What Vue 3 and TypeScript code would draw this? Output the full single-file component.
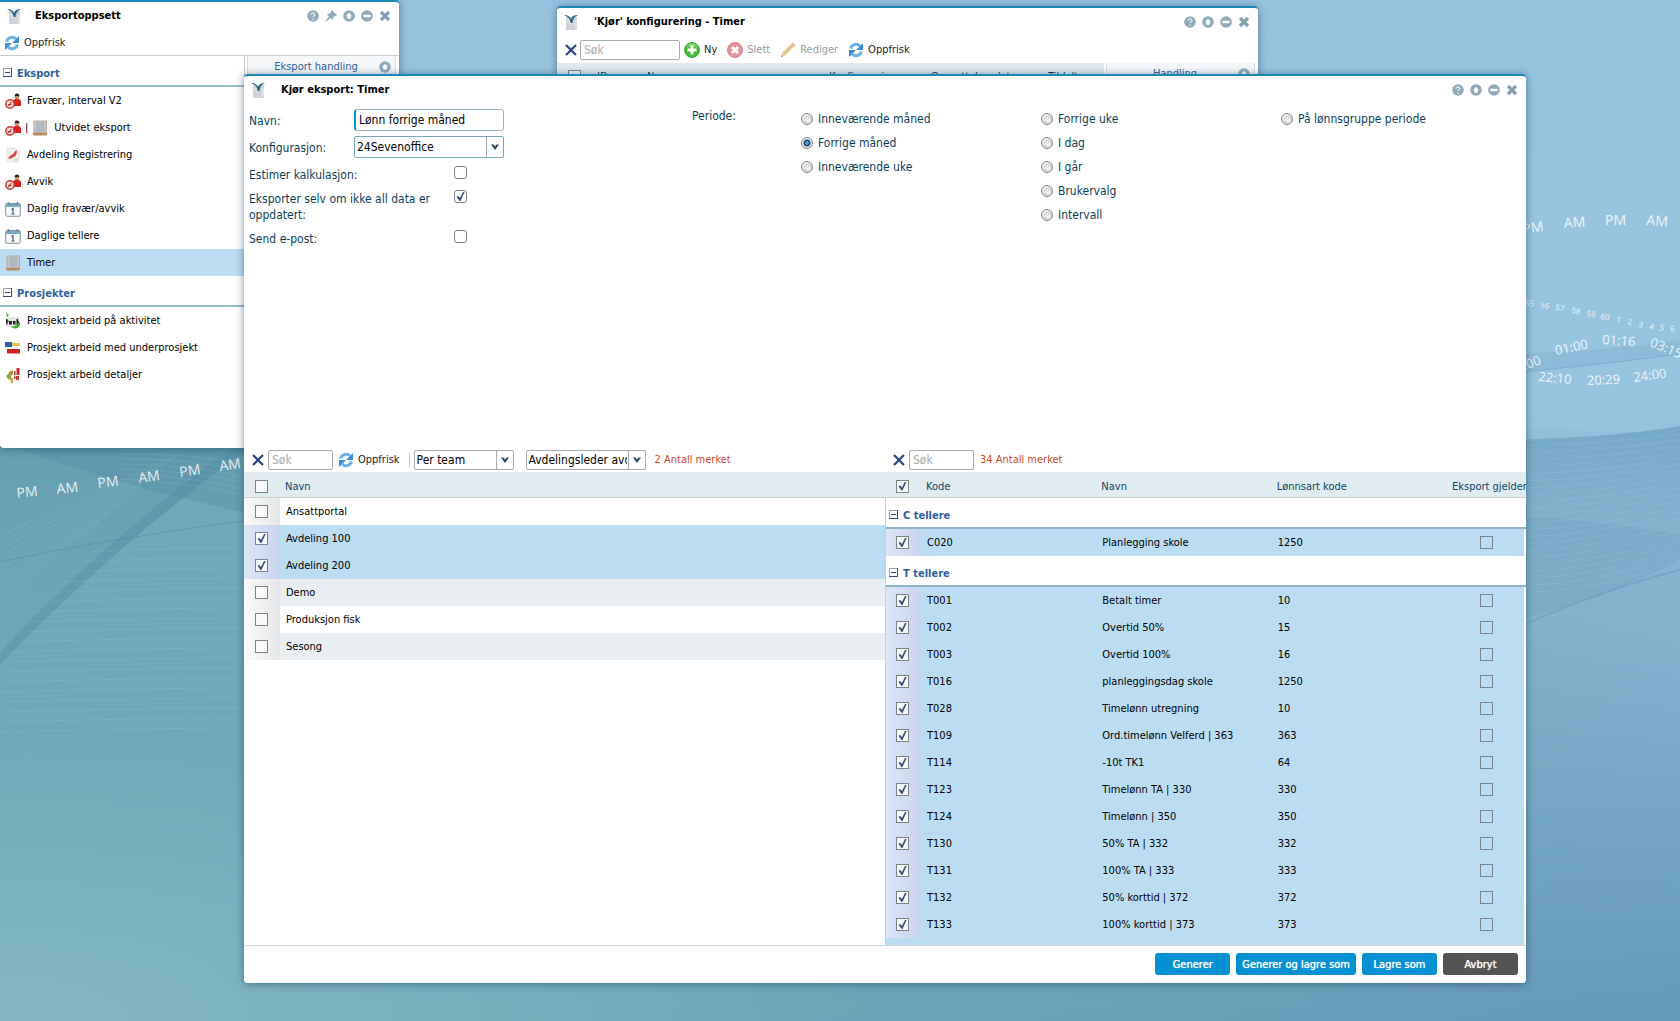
<script setup lang="ts">
import { ref } from 'vue'

interface NavItem { icon: string; label: string; extra?: string; active?: boolean }
interface NavGroup { title: string; items: NavItem[] }
interface CounterRow { code: string; name: string; wage: string }
interface CounterGroup { title: string; rows: CounterRow[] }
interface WallText { t: string; x: number; y: number; r: number }

const navGroups: NavGroup[] = [
  {
    title: 'Eksport',
    items: [
      { icon: 'person', label: 'Fravær, interval V2' },
      { icon: 'person', extra: 'sheet', label: 'Utvidet eksport' },
      { icon: 'dept', label: 'Avdeling Registrering' },
      { icon: 'person', label: 'Avvik' },
      { icon: 'calendar', label: 'Daglig fravær/avvik' },
      { icon: 'calendar', label: 'Daglige tellere' },
      { icon: 'sheet', label: 'Timer', active: true },
    ],
  },
  {
    title: 'Prosjekter',
    items: [
      { icon: 'task', label: 'Prosjekt arbeid på aktivitet' },
      { icon: 'blocks', label: 'Prosjekt arbeid med underprosjekt' },
      { icon: 'details', label: 'Prosjekt arbeid detaljer' },
    ],
  },
]

const periodColumns: string[][] = [
  ['Inneværende måned', 'Forrige måned', 'Inneværende uke'],
  ['Forrige uke', 'I dag', 'I går', 'Brukervalg', 'Intervall'],
  ['På lønnsgruppe periode'],
]
const period = ref('Forrige måned')
const exportName = ref('Lønn forrige måned')

const teams = ref([
  { name: 'Ansattportal', on: false },
  { name: 'Avdeling 100', on: true },
  { name: 'Avdeling 200', on: true },
  { name: 'Demo', on: false },
  { name: 'Produksjon fisk', on: false },
  { name: 'Sesong', on: false },
])

const counterGroups: CounterGroup[] = [
  { title: 'C tellere', rows: [{ code: 'C020', name: 'Planlegging skole', wage: '1250' }] },
  {
    title: 'T tellere',
    rows: [
      { code: 'T001', name: 'Betalt timer', wage: '10' },
      { code: 'T002', name: 'Overtid 50%', wage: '15' },
      { code: 'T003', name: 'Overtid 100%', wage: '16' },
      { code: 'T016', name: 'planleggingsdag skole', wage: '1250' },
      { code: 'T028', name: 'Timelønn utregning', wage: '10' },
      { code: 'T109', name: 'Ord.timelønn Velferd | 363', wage: '363' },
      { code: 'T114', name: '-10t TK1', wage: '64' },
      { code: 'T123', name: 'Timelønn TA | 330', wage: '330' },
      { code: 'T124', name: 'Timelønn | 350', wage: '350' },
      { code: 'T130', name: '50% TA | 332', wage: '332' },
      { code: 'T131', name: '100% TA | 333', wage: '333' },
      { code: 'T132', name: '50% korttid | 372', wage: '372' },
      { code: 'T133', name: '100% korttid | 373', wage: '373' },
    ],
  },
]

const tools: Record<string, string> = { help: 'Hjelp', pin: 'Fest', up: 'Maksimer', minus: 'Minimer', close: 'Lukk' }

const ampm: WallText[] = [
  { t: 'PM', x: 17, y: 498, r: -6 }, { t: 'AM', x: 57, y: 494, r: -6 },
  { t: 'PM', x: 98, y: 488, r: -7 }, { t: 'AM', x: 139, y: 483, r: -8 },
  { t: 'PM', x: 180, y: 477, r: -8 }, { t: 'AM', x: 220, y: 471, r: -8 },
  { t: 'PM', x: 1523, y: 234, r: -8 }, { t: 'AM', x: 1564, y: 228, r: -4 },
  { t: 'PM', x: 1605, y: 225, r: 0 }, { t: 'AM', x: 1646, y: 225, r: 4 },
]
const clock: WallText[] = [
  { t: '03:00', x: 1511, y: 376, r: -22 }, { t: '01:00', x: 1556, y: 355, r: -12 },
  { t: '01:16', x: 1602, y: 344, r: 4 }, { t: '03:15', x: 1649, y: 346, r: 22 },
  { t: '22:10', x: 1538, y: 381, r: 5 }, { t: '20:29', x: 1587, y: 385, r: -2 },
  { t: '24:00', x: 1634, y: 382, r: -8 },
]
const seconds: WallText[] = [
  { t: '55', x: 1525, y: 306, r: 4 }, { t: '56', x: 1540, y: 308, r: 6 },
  { t: '57', x: 1555, y: 310, r: 8 }, { t: '58', x: 1571, y: 313, r: 10 },
  { t: '59', x: 1586, y: 316, r: 10 }, { t: '60', x: 1600, y: 319, r: 10 },
  { t: '1', x: 1616, y: 322, r: 10 }, { t: '2', x: 1627, y: 324, r: 10 },
  { t: '3', x: 1638, y: 327, r: 10 }, { t: '4', x: 1649, y: 329, r: 10 },
  { t: '5', x: 1659, y: 330, r: 10 }, { t: '6', x: 1670, y: 331, r: 10 },
]

const fan = Array.from({ length: 12 }, (_, i) => `M0 ${536 + i * 7} Q ${70 - i * 2} ${502 + i * 5} ${176 - i * 7} ${456 + i * 6}`)
const ripples = Array.from({ length: 19 }, (_, i) => `M${Math.max(0, 90 - i * 9)} ${552 + i * 10} Q 150 ${548 + i * 10} 250 ${548 + i * 10}`)
const crest = Array.from({ length: 6 }, (_, i) => `M120 ${454 + i * 5} Q 190 ${452 + i * 6} 250 ${466 + i * 6}`)
const rightRipples = Array.from({ length: 22 }, (_, i) => `M1520 ${446 + i * 7} Q 1600 ${444 + i * 7} 1680 ${434 + i * 6}`)
</script>

<template>
  <div class="desktop">
    <svg class="wallpaper" viewBox="0 0 1680 1021" preserveAspectRatio="xMidYMid slice" aria-hidden="true">
      <defs>
        <linearGradient id="wp-base" x1="0" y1="0" x2="0" y2="1">
          <stop offset="0" stop-color="#98c2df" />
          <stop offset="0.4" stop-color="#96c5e1" />
          <stop offset="0.62" stop-color="#82b3cf" />
          <stop offset="1" stop-color="#6698b9" />
        </linearGradient>
        <linearGradient id="wp-left" x1="0" y1="0" x2="1" y2="0">
          <stop offset="0" stop-color="#6fa9b9" />
          <stop offset="0.35" stop-color="#6fa9b9" stop-opacity="0.95" />
          <stop offset="1" stop-color="#6fa9b9" stop-opacity="0" />
        </linearGradient>
        <radialGradient id="wp-corner" cx="0" cy="1" r="0.5">
          <stop offset="0" stop-color="#8abbc9" stop-opacity="0.8" />
          <stop offset="1" stop-color="#8abbc9" stop-opacity="0" />
        </radialGradient>
        <linearGradient id="wp-fold" x1="0" y1="0" x2="0" y2="1">
          <stop offset="0" stop-color="#6099ad" />
          <stop offset="1" stop-color="#6fa8b9" />
        </linearGradient>
        <linearGradient id="wp-wave" x1="0" y1="0" x2="0" y2="1">
          <stop offset="0" stop-color="#76a9c6" />
          <stop offset="1" stop-color="#76a9c6" stop-opacity="0" />
        </linearGradient>
      </defs>
      <rect width="1680" height="1021" fill="url(#wp-base)" />
      <rect y="430" width="1680" height="591" fill="url(#wp-left)" />
      <rect y="430" width="1680" height="591" fill="url(#wp-corner)" />
      <path d="M0 446H250V448Q120 540 0 665Z" fill="url(#wp-fold)" opacity="0.6" />
      <path d="M15 446H250V514Q130 488 15 448Z" fill="#5288a2" opacity="0.35" />
      <path d="M250 446Q110 550 0 665V652Q100 544 232 448Z" fill="#4f86a2" opacity="0.35" />
      <path d="M0 562Q100 540 250 520" fill="none" stroke="#4f86a2" stroke-opacity="0.5" />
      <g fill="none" stroke="#a9d3df" stroke-opacity="0.16">
        <path v-for="(d, i) in fan" :key="'f' + i" :d="d" />
        <path v-for="(d, i) in ripples" :key="'r' + i" :d="d" />
        <path v-for="(d, i) in crest" :key="'c' + i" :d="d" />
      </g>
      <path d="M1500 374Q1600 365 1680 354V340Q1600 352 1500 354Z" fill="#7db0d0" opacity="0.4" />
      <path d="M1500 374Q1600 365 1680 354" fill="none" stroke="#6fa3c2" stroke-opacity="0.6" />
      <path d="M1500 440Q1610 438 1680 426V620H1500Z" fill="url(#wp-wave)" />
      <path d="M1500 515Q1600 520 1680 535V560Q1600 600 1500 625Z" fill="#6c9fbe" opacity="0.3" />
      <path d="M1500 635Q1600 590 1680 570" fill="none" stroke="#5f93b2" stroke-opacity="0.4" stroke-width="2" />
      <g fill="none" stroke="#b3d9e8" stroke-opacity="0.16">
        <path v-for="(d, i) in rightRipples" :key="'rr' + i" :d="d" />
      </g>
      <g class="wall-text">
        <text v-for="(w, i) in ampm" :key="'a' + i" font-size="14" :transform="`translate(${w.x} ${w.y}) rotate(${w.r})`">{{ w.t }}</text>
        <text v-for="(w, i) in clock" :key="'k' + i" font-size="13" :transform="`translate(${w.x} ${w.y}) rotate(${w.r})`">{{ w.t }}</text>
        <text v-for="(w, i) in seconds" :key="'s' + i" font-size="8" :transform="`translate(${w.x} ${w.y}) rotate(${w.r})`">{{ w.t }}</text>
      </g>
    </svg>

    <svg class="sprite" aria-hidden="true">
      <symbol id="i-app" viewBox="0 0 16 16">
        <path d="M3 3h11v13H3z" fill="#cfd2d6" /><path d="M4 6l4 4M13 6v9" stroke="#e6e8ea" stroke-width="1.500" />
        <path d="M1 1c3-.5 5.500 1 7 4 1-3 3.500-4.500 7-3.500-3 .5-5 3-5.500 7.500h-2C7.500 5.500 5 2.500 1 1z" fill="#2f6a88" />
      </symbol>
      <symbol id="i-refresh" viewBox="0 0 16 16">
        <path d="M2.500 6.500C4 2 9 1 12 4" fill="none" stroke="#6cb2e8" stroke-width="3" /><path d="M15 1v7H8z" fill="#3b8fd6" />
        <path d="M13.500 9.500C12 14 7 15 4 12" fill="none" stroke="#6cb2e8" stroke-width="3" /><path d="M1 15V8h7z" fill="#3b8fd6" />
      </symbol>
      <symbol id="i-help" viewBox="0 0 12 12">
        <circle cx="6" cy="6" r="5.800" fill="#8fabb8" />
        <path d="M4.200 4.700c0-2.400 3.800-2.200 3.700-.1C7.900 5.700 6 5.700 6 7.300" fill="none" stroke="#e8eff2" stroke-width="1.200" /><circle cx="6" cy="9.200" r=".8" fill="#e8eff2" />
      </symbol>
      <symbol id="i-pin" viewBox="0 0 12 12">
        <path d="M7 0l5 5-1 1-1-.3L8 8l-.2 2.200L5.500 8 1 11.500.5 11 4 6.500 1.800 4.200 4 4l2.300-2L6 1z" fill="#8fabb8" />
      </symbol>
      <symbol id="i-up" viewBox="0 0 12 12">
        <circle cx="6" cy="6" r="5.800" fill="#8fabb8" /><path d="M6 2.800l2.800 2.900-1.100 1v2H4.300v-2l-1.100-1z" fill="#fff" />
      </symbol>
      <symbol id="i-minus" viewBox="0 0 12 12">
        <circle cx="6" cy="6" r="5.800" fill="#8fabb8" /><rect x="2.500" y="4.700" width="7" height="2.600" rx=".5" fill="#fff" />
      </symbol>
      <symbol id="i-close" viewBox="0 0 12 12">
        <path d="M2 2l8 8M10 2l-8 8" stroke="#869fae" stroke-width="3.200" />
      </symbol>
      <symbol id="i-clear" viewBox="0 0 12 12">
        <path d="M1 1l10 10M11 1L1 11" stroke="#28457f" stroke-width="2.200" />
      </symbol>
      <symbol id="i-add" viewBox="0 0 16 16">
        <circle cx="8" cy="8" r="7.500" fill="#3fbb33" stroke="#45a53c" /><path d="M8 3.500v9M3.500 8h9" stroke="#fff" stroke-width="3" />
        <path d="M2 6a6.200 6.200 0 0112 0c-4-2-8-2-12 0z" fill="#fff" opacity=".3" />
      </symbol>
      <symbol id="i-delete" viewBox="0 0 16 16">
        <circle cx="8" cy="8" r="7.500" fill="#e6929b" stroke="#d98189" /><path d="M5 5l6 6M11 5l-6 6" stroke="#fff" stroke-width="3" />
      </symbol>
      <symbol id="i-edit" viewBox="0 0 16 16">
        <path d="M1 15l1.500-5L11 2l3 3-8.500 8.500z" fill="#ead3a0" /><path d="M11 2l1.500-1.500 3 3L14 5z" fill="#e3a9a4" /><path d="M1 15l.6-2 1.400 1.400z" fill="#777" />
        <path d="M4 12l8-8" stroke="#c9a869" />
      </symbol>
      <symbol id="i-person" viewBox="0 0 16 16">
        <path d="M7 13V8l3-2h4l2 2v5z" fill="#dc2019" /><circle cx="12" cy="4" r="2.200" fill="#c08a64" /><path d="M9.800 4V1.800Q12-.8 14.200 1.800V4l-.7-1h-3z" fill="#2e1b15" />
        <circle cx="5" cy="11" r="4.200" fill="#f6dcda" stroke="#c93b37" stroke-width="1.500" /><path d="M3 11.500h3.500M6.500 9l-3 4" stroke="#c62f2c" stroke-width="1.200" />
      </symbol>
      <symbol id="i-sheet" viewBox="0 0 16 16">
        <path d="M2 1h12.500v12H2z" fill="#c3c9ce" stroke="#b4a596" /><path d="M4 3h8.500M4 5h8.500M4 7h8.500M4 9h8.500M4 11h8.500" stroke="#9eabb6" /><path d="M.5 13h15l-1.500 2.500H2z" fill="#b98a5c" />
      </symbol>
      <symbol id="i-dept" viewBox="0 0 16 16">
        <path d="M2 1h9l3 3v11H2z" fill="#f2efec" stroke="#ddd8d2" stroke-width=".6" /><path d="M3 11l3-3 2-1 2-3 2-.5v2L10.500 9 8 10.500 5 12z" fill="#d4505a" /><path d="M9 12h4v2H9z" fill="#cfe0b8" />
      </symbol>
      <symbol id="i-calendar" viewBox="0 0 16 16">
        <rect x=".7" y="2.500" width="14.600" height="12.800" rx="1.500" fill="#f7fafb" stroke="#7d909b" /><path d="M1 3h14v3H1z" fill="#7aa7c1" />
        <path d="M3.500 1v3M12.500 1v3" stroke="#6f8895" stroke-width="1.500" /><path d="M6.500 8.500L8 7.500V13M6.500 13h3" fill="none" stroke="#465a68" stroke-width="1.200" />
      </symbol>
      <symbol id="i-task" viewBox="0 0 16 16">
        <path d="M1 4h13v10H1z" fill="#e6e6e6" /><path d="M1 6h1.500v1.500h1V9h-1v2.500H1zM4 8h3v3.500H4zM8 8h2.500v3.500H8zM11.500 6H13v2l1.500-.5-1 2 1.500 2h-1.500L13 10v1.500h-1.500z" fill="#222" /><path d="M1 0l3 2-2 2z" fill="#35a82c" />
        <path d="M6 13l3 .5 6-4.500c1 4-2 6.500-5 6.500-2 0-3-1-4-2.500z" fill="#3fae33" />
      </symbol>
      <symbol id="i-blocks" viewBox="0 0 16 16">
        <rect x="0" y="2" width="7" height="5" fill="#2a5db0" /><rect x="7" y="3" width="8" height="3" fill="#e9c14a" /><rect x="2" y="9" width="13" height="4.500" rx=".5" fill="#cc1f22" />
      </symbol>
      <symbol id="i-details" viewBox="0 0 16 16">
        <path d="M1 9l5-5v9l-3-1z" fill="#7db244" /><path d="M4 5l4-2v4L5 9z" fill="#c9853a" /><path d="M5 10l3 1v5H6z" fill="#d9a441" /><path d="M9 4h1.500v8H9z" fill="#8d4b3a" />
        <path d="M11.500 1h3v7h-3z" fill="#d7262b" /><path d="M11 9h3v4h-3z" fill="#c93a35" /><path d="M7 7.500l4 1-4 2z" fill="#fff" />
      </symbol>
      <symbol id="i-fold" viewBox="0 0 10 10">
        <path d="M.5.500h8v8h-8z" fill="#fff" stroke="#8ea0b4" /><path d="M8.500 0v9M0 8.500h9" stroke="#3a4f72" /><path d="M2 4.500h5" stroke="#28457f" />
      </symbol>
      <symbol id="i-chevron" viewBox="0 0 10 8">
        <path d="M1 1.500h2.500L5 3.500 6.500 1.500H9L5 7z" fill="#28496b" />
      </symbol>
    </svg>

    <section class="window win-setup" aria-label="Eksportoppsett">
      <header class="titlebar">
        <svg class="app-icon"><use href="#i-app" /></svg>
        <h2>Eksportoppsett</h2>
        <div class="tools">
          <button v-for="t in ['help', 'pin', 'up', 'minus', 'close']" :key="t" type="button" :aria-label="tools[t]"><svg><use :href="'#i-' + t" /></svg></button>
        </div>
      </header>
      <div class="setup-bar">
        <button type="button" class="tool-btn"><svg><use href="#i-refresh" /></svg>Oppfrisk</button>
      </div>
      <div class="setup-body">
        <nav class="setup-nav">
          <template v-for="g in navGroups" :key="g.title">
            <h3 class="group-title"><svg><use href="#i-fold" /></svg>{{ g.title }}</h3>
            <ul>
              <li v-for="n in g.items" :key="n.label">
                <a href="#" :class="{ active: n.active }">
                  <svg><use :href="'#i-' + n.icon" /></svg>
                  <template v-if="n.extra"><span class="bar">|</span><svg class="extra"><use :href="'#i-' + n.extra" /></svg></template>
                  <span>{{ n.label }}</span>
                </a>
              </li>
            </ul>
          </template>
        </nav>
        <aside class="side-panel">
          <h3>Eksport handling</h3>
          <button type="button" aria-label="Utvid"><svg><use href="#i-up" /></svg></button>
        </aside>
      </div>
    </section>

    <section class="window win-config" aria-label="'Kjør' konfigurering - Timer">
      <header class="titlebar">
        <svg class="app-icon"><use href="#i-app" /></svg>
        <h2>'Kjør' konfigurering - Timer</h2>
        <div class="tools">
          <button v-for="t in ['help', 'up', 'minus', 'close']" :key="t" type="button" :aria-label="tools[t]"><svg><use :href="'#i-' + t" /></svg></button>
        </div>
      </header>
      <div class="config-bar">
        <button type="button" class="clear" aria-label="Tøm søk"><svg><use href="#i-clear" /></svg></button>
        <input class="field search wide" type="text" placeholder="Søk" aria-label="Søk" />
        <button type="button" class="tool-btn"><svg><use href="#i-add" /></svg>Ny</button>
        <button type="button" class="tool-btn" disabled><svg><use href="#i-delete" /></svg>Slett</button>
        <button type="button" class="tool-btn" disabled><svg><use href="#i-edit" /></svg>Rediger</button>
        <button type="button" class="tool-btn"><svg><use href="#i-refresh" /></svg>Oppfrisk</button>
      </div>
      <div class="config-body">
        <table class="config-table">
          <thead>
            <tr>
              <th class="c-check"><input type="checkbox" class="box" aria-label="Velg alle" /></th>
              <th class="c-id">ID</th>
              <th>Navn</th>
              <th class="c-conf">Konfigurasjon</th>
              <th class="c-date">Opprettelsesdato</th>
              <th class="c-last">Tildelt</th>
            </tr>
          </thead>
        </table>
        <aside class="side-panel">
          <h3>Handling</h3>
          <button type="button" aria-label="Utvid"><svg><use href="#i-up" /></svg></button>
        </aside>
      </div>
    </section>

    <section class="window win-run" aria-label="Kjør eksport: Timer">
      <header class="titlebar">
        <svg class="app-icon"><use href="#i-app" /></svg>
        <h2>Kjør eksport: Timer</h2>
        <div class="tools">
          <button v-for="t in ['help', 'up', 'minus', 'close']" :key="t" type="button" :aria-label="tools[t]"><svg><use :href="'#i-' + t" /></svg></button>
        </div>
      </header>

      <form class="run-form" @submit.prevent>
        <div class="form-left">
          <div class="form-row">
            <label for="navn">Navn:</label>
            <input id="navn" v-model="exportName" class="field required" type="text" />
          </div>
          <div class="form-row">
            <label for="konf">Konfigurasjon:</label>
            <span class="combo tall">
              <select id="konf"><option>24Sevenoffice</option></select>
              <svg><use href="#i-chevron" /></svg>
            </span>
          </div>
          <div class="form-row check">
            <label for="estimer">Estimer kalkulasjon:</label>
            <input id="estimer" type="checkbox" class="box round" />
          </div>
          <div class="form-row check">
            <label for="selvom">Eksporter selv om ikke all data er oppdatert:</label>
            <input id="selvom" type="checkbox" class="box round" checked />
          </div>
          <div class="form-row check">
            <label for="epost">Send e-post:</label>
            <input id="epost" type="checkbox" class="box round" />
          </div>
        </div>
        <fieldset class="periods">
          <legend>Periode:</legend>
          <div v-for="(col, i) in periodColumns" :key="i" class="period-col">
            <label v-for="p in col" :key="p"><input v-model="period" type="radio" name="periode" :value="p" />{{ p }}</label>
          </div>
        </fieldset>
      </form>

      <div class="lists">
        <div class="list">
          <div class="list-bar">
            <button type="button" class="clear" aria-label="Tøm søk"><svg><use href="#i-clear" /></svg></button>
            <input class="field search" type="text" placeholder="Søk" aria-label="Søk team" />
            <button type="button" class="tool-btn"><svg><use href="#i-refresh" /></svg>Oppfrisk</button>
            <span class="sep"></span>
            <span class="combo team">
              <select aria-label="Visning"><option>Per team</option></select>
              <svg><use href="#i-chevron" /></svg>
            </span>
            <span class="combo role">
              <select aria-label="Rolle"><option>Avdelingsleder avdeling</option></select>
              <svg><use href="#i-chevron" /></svg>
            </span>
            <span class="count">2 Antall merket</span>
          </div>
          <div class="list-body">
            <table class="grid">
              <thead>
                <tr><th class="c-check"><input type="checkbox" class="box" aria-label="Velg alle team" /></th><th>Navn</th></tr>
              </thead>
              <tbody>
                <tr v-for="t in teams" :key="t.name" :class="{ on: t.on }">
                  <td class="c-check"><input v-model="t.on" type="checkbox" class="box" :aria-label="t.name" /></td>
                  <td>{{ t.name }}</td>
                </tr>
              </tbody>
            </table>
          </div>
        </div>

        <div class="list right">
          <div class="list-bar">
            <button type="button" class="clear" aria-label="Tøm søk"><svg><use href="#i-clear" /></svg></button>
            <input class="field search" type="text" placeholder="Søk" aria-label="Søk tellere" />
            <span class="count">34 Antall merket</span>
          </div>
          <div class="list-body">
            <table class="grid">
              <thead>
                <tr>
                  <th class="c-check"><input type="checkbox" class="box" checked aria-label="Velg alle tellere" /></th>
                  <th>Kode</th><th>Navn</th><th>Lønnsart kode</th><th class="c-exp">Eksport gjelder</th>
                </tr>
              </thead>
              <tbody v-for="g in counterGroups" :key="g.title">
                <tr class="group"><th colspan="5"><span class="group-title"><svg><use href="#i-fold" /></svg>{{ g.title }}</span></th></tr>
                <tr v-for="r in g.rows" :key="r.code" class="on">
                  <td class="c-check"><input type="checkbox" class="box" checked :aria-label="r.code" /></td>
                  <td>{{ r.code }}</td><td>{{ r.name }}</td><td>{{ r.wage }}</td>
                  <td class="c-box"><input type="checkbox" class="box clear-box" :aria-label="'Eksport gjelder ' + r.code" /></td>
                </tr>
              </tbody>
            </table>
            <div class="next-row"></div>
          </div>
        </div>
      </div>

      <footer class="run-footer">
        <button type="button">Generer</button>
        <button type="button">Generer og lagre som</button>
        <button type="button">Lagre som</button>
        <button type="button" class="cancel">Avbryt</button>
      </footer>
    </section>
  </div>
</template>

<style>
body { margin: 0; }
</style>

<style scoped>
.desktop {
  position: relative;
  min-height: 100vh;
  overflow: hidden;
  font: 11px/16px Tahoma, "DejaVu Sans Condensed", "Noto Sans", sans-serif;
  color: #000;
}
.desktop *, .desktop *::after { box-sizing: border-box; }
.wallpaper { position: absolute; inset: 0; width: 100%; height: 100%; }
.wall-text { fill: #fff; fill-opacity: 0.8; font-family: "Noto Sans", sans-serif; }
.sprite { position: absolute; width: 0; height: 0; }
h2, h3, ul { margin: 0; padding: 0; list-style: none; }
button, input, select { font: inherit; color: inherit; margin: 0; }
button { border: 0; padding: 0; background: none; }
svg { display: block; flex: none; }

.window {
  position: absolute;
  display: flex;
  flex-direction: column;
  background: #fff;
  border-top: 2px solid #1a87b8;
  border-radius: 4px;
  box-shadow: 0 1px 8px rgba(30, 70, 95, 0.6);
}
.win-setup { left: 0; top: 0; width: 399px; height: 448px; border-top-left-radius: 0; }
.win-config { left: 557px; top: 6px; width: 701px; height: 300px; }
.win-run { left: 244px; right: 154px; top: 74px; bottom: 38px; overflow: hidden; }

.titlebar { display: flex; align-items: center; height: 27px; padding: 0 8px 0 6px; flex: none; }
.win-config .titlebar { height: 28px; }
.titlebar h2 { flex: 1; font-size: 11px; font-weight: bold; }
.app-icon { width: 16px; height: 16px; margin-right: 15px; }
.win-setup .app-icon { margin-right: 13px; }
.tools { display: flex; gap: 6px; }
.tools svg, .side-panel svg { width: 12px; height: 12px; }

.tool-btn { display: flex; align-items: center; gap: 4px; color: #222; white-space: nowrap; }
.tool-btn svg { width: 16px; height: 16px; }
.tool-btn:disabled { color: #999; }
.clear svg { width: 12px; height: 12px; }

.setup-bar { display: flex; align-items: center; height: 27px; padding: 2px 0 0 4px; border-bottom: 1px solid #c9c9c9; }
.setup-body { display: flex; flex: 1; }
.setup-nav { width: 245px; border-right: 1px solid #c9c9c9; }
.group-title { display: flex; align-items: center; gap: 4px; height: 31px; padding: 7px 0 0 3px; border-bottom: 2px solid #97bccd; font-size: 11px; font-weight: bold; color: #2f609f; }
.group-title svg { width: 10px; height: 10px; margin-bottom: 2px; }
.setup-nav a { display: flex; align-items: center; height: 27px; padding: 1px 0 0 5px; color: #000; text-decoration: none; white-space: nowrap; }
.setup-nav a svg { width: 16px; height: 16px; margin-right: 6px; }
.setup-nav a .bar { margin-left: -2px; margin-right: 4px; }
.setup-nav a.active { background: #bbddf3; }
.side-panel { display: flex; flex: 1; align-self: flex-start; height: 22px; align-items: center; margin: 0 3px 0 2px; padding: 0 4px 0 5px; background: #f6f7f9; border: 1px solid #dadfe3; border-top: 0; }
.side-panel h3 { flex: 1; font-size: 11px; font-weight: normal; text-align: center; color: #2f609f; }

.config-bar { display: flex; align-items: center; gap: 10px; height: 27px; padding-left: 8px; }
.config-bar .clear { margin-right: -7px; }
.config-bar .wide { width: 100px; margin-right: -6px; }
.config-body { display: flex; }
.config-table { width: 547px; border-collapse: collapse; table-layout: fixed; background: #e1e9ef; }
.config-table th { height: 27px; padding: 0; text-align: left; font-weight: normal; color: #033a55; white-space: nowrap; }
.config-table .c-check { width: 40px; padding-left: 11px; }
.config-table .c-id { width: 50px; }
.config-table .c-conf { width: 102px; }
.config-table .c-date { width: 117px; }
.config-table .c-last { width: 56px; }

.field { height: 20px; padding: 0 3px; border: 1px solid #a5adb3; border-radius: 2px; background: #fff; font-size: 12px; color: #000; outline: 0; }
.field::placeholder { color: #aaa; opacity: 1; }
.search { width: 65px; }
.required { width: 150px; height: 22px; border-color: #9ab4c4; border-left: 2px solid #0590d2; border-radius: 3px; }

.combo { position: relative; display: block; width: 100px; height: 20px; border: 1px solid #a5adb3; border-radius: 2px; background: #fff; font-size: 12px; overflow: hidden; }
.combo select { display: block; width: 100%; height: 100%; padding: 0 18px 0 2px; border: 0; background: none; appearance: none; outline: 0; color: #000; text-overflow: clip; }
.combo svg { position: absolute; top: 0; right: 0; width: 17px; height: 100%; padding: 5px 3px; border-left: 1px solid #a5adb3; pointer-events: none; }
.combo.tall { width: 150px; height: 22px; border-color: #7ba4bd; }
.combo.role { width: 120px; margin-left: 8px; }

.box { appearance: none; position: relative; display: block; width: 13px; height: 13px; border: 1px solid #7c848a; background: #f8f9f9; }
.box.round { border-radius: 3px; background: #fff; }
.box.clear-box { background: transparent; }
.box:checked::after { content: ""; position: absolute; inset: 1px; background: #3d4f80; clip-path: polygon(6% 54%, 24% 44%, 44% 66%, 78% 0, 96% 0, 50% 100%, 38% 100%); }

.run-form { display: flex; min-height: 344px; color: #0b3f5a; font-size: 12px; }
.form-left { width: 448px; padding: 6px 0 0 5px; }
.form-row { display: flex; align-items: flex-start; height: 22px; margin-bottom: 5px; }
.form-row label { width: 105px; padding-top: 4px; }
.form-row.check { height: auto; align-items: flex-start; margin-bottom: 4px; }
.form-row.check label { width: 205px; padding: 4px 20px 0 0; }
.form-row.check .box { margin-top: 3px; }
.periods { display: flex; flex: 1; margin: 0; padding: 4px 0 0; border: 0; min-width: 0; }
.periods legend { float: left; width: 109px; padding: 1px 0 0; }
.period-col { width: 240px; display: flex; flex-direction: column; }
.period-col label { display: flex; align-items: center; gap: 5px; height: 24px; white-space: nowrap; }
.period-col input { appearance: none; width: 12px; height: 12px; border: 1px solid #84888b; border-radius: 50%; background: radial-gradient(circle at 6px 6px, #f2f2f2 1px, #cfcfcf 4px, #eee 5px); }
.period-col input:checked { background: radial-gradient(circle at 5px 5px, #4da3dc 1px, #16406d 3px, #e4e8ea 4px); }

.lists { display: flex; flex: 1; min-height: 0; }
.list { display: flex; flex: 1 1 0; flex-direction: column; min-width: 0; }
.list-bar { display: flex; align-items: center; gap: 4px; height: 25px; padding-left: 8px; flex: none; }
.list-bar .tool-btn { margin-left: 1px; }
.sep { width: 1px; height: 14px; margin-left: 5px; background: #b5c5cd; }
.count { margin-left: 5px; color: #cf4a1c; }
.list-body { flex: 1; min-height: 0; overflow: hidden; }
.right .count { margin-left: 2px; }
.grid { width: 100%; border-collapse: separate; border-spacing: 0; table-layout: fixed; }
.grid thead th { height: 26px; padding: 4px 0 0 5px; border-bottom: 1px solid #cbd0d3; background: #e1ecf1; color: #0b4767; font-weight: normal; text-align: left; white-space: nowrap; }
.grid .c-check { width: 36px; padding: 0 0 0 11px; }
.grid thead th.c-check { padding: 3px 0 0 11px; }
.grid td { height: 27px; padding: 1px 0 0 6px; }
.grid tbody tr:nth-child(even) td { background: #e9eef2; }
.grid tbody tr:nth-child(odd) td { background: #fff; }
.grid tbody tr td.c-check { background: linear-gradient(90deg, #fafafa, #e6e7e8); }
.grid tbody tr.on td { background: #bbddf3; }
.grid tbody tr.on td.c-check { background: linear-gradient(90deg, #dde6f8, #c8d4ee); }
.grid .c-exp { width: 79px; }
.grid td.c-box { padding: 0 0 0 33px; border-right: 2px solid #fff; }
.right .grid tbody td.c-check { border-left: 1px solid #cbd0d3; padding-left: 10px; }
.grid .group th { padding: 0; text-align: left; border-left: 1px solid #cbd0d3; }
.group .group-title { border-color: #8fb3cd; }
.next-row { height: 27px; background: #bbddf3; border-right: 2px solid #fff; border-left: 1px solid #cbd0d3; }

.run-footer { display: flex; align-items: flex-start; justify-content: flex-end; gap: 6px; height: 38px; padding: 7px 8px 0 0; border-top: 1px solid #d5d5d5; background: #fff; flex: none; }
.run-footer button { min-width: 75px; height: 22px; padding: 1px 6px 0; border-radius: 3px; background: #0590d2; color: #fff; text-shadow: 0 0 1px #fff; }
.run-footer .cancel { background: #545454; }
</style>
